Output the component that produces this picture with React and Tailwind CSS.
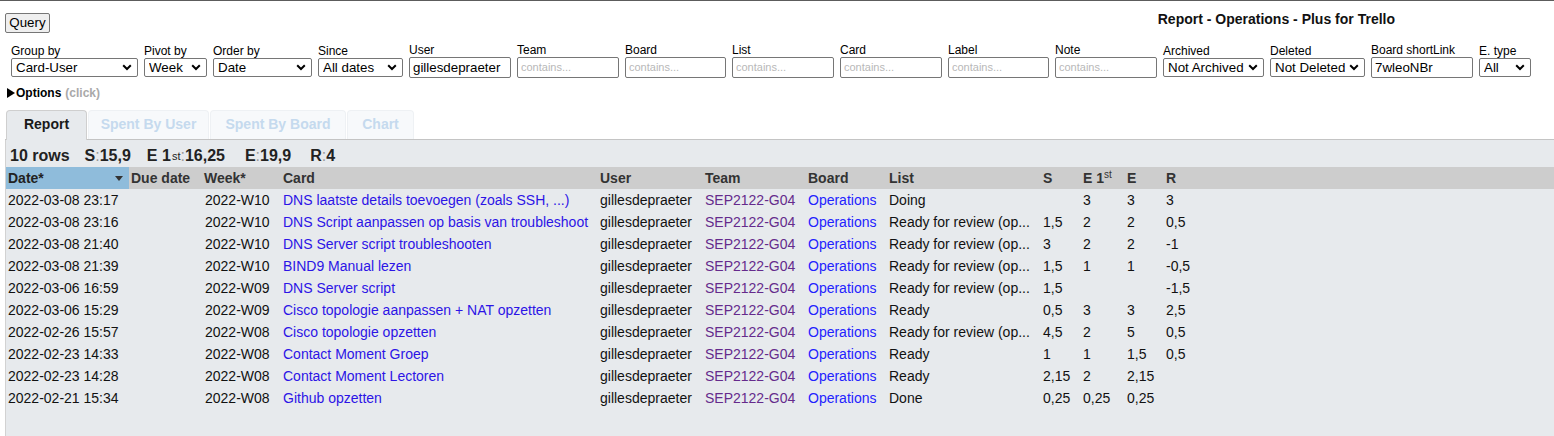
import React from "react";

const font = "font-['Liberation_Sans',Arial,sans-serif]";

function Chevron() {
  return (
    <svg width="10" height="7" viewBox="0 0 10 7" className="shrink-0">
      <path d="M1.2 1.3 L5 5 L8.8 1.3" fill="none" stroke="#000" strokeWidth="2" />
    </svg>
  );
}

function SelectField({ label, value, w }) {
  return (
    <div className="flex flex-col pt-[1px] shrink-0" style={{ width: w }}>
      <div className="text-[12px] leading-[14px] whitespace-nowrap">{label}</div>
      <div className="h-[19px] border border-[#767676] rounded-[2px] bg-white flex items-center pl-[4px] pr-[5px] text-[13.33px] leading-[17px]">
        <span className="flex-1 whitespace-nowrap overflow-hidden">{value}</span>
        <Chevron />
      </div>
    </div>
  );
}

function InputField({ label, value, w }) {
  return (
    <div className="flex flex-col shrink-0" style={{ width: w }}>
      <div className="text-[12px] leading-[14px] whitespace-nowrap">{label}</div>
      <div className="h-[21px] border border-[#767676] rounded-[2px] bg-white flex items-center pl-[3px] whitespace-nowrap overflow-hidden">
        {value ? (
          <span className="text-[13.33px]">{value}</span>
        ) : (
          <span className="text-[11px] text-[#b8b8b8]">contains...</span>
        )}
      </div>
    </div>
  );
}

const rows = [
  ["2022-03-08 23:17", "2022-W10", "DNS laatste details toevoegen (zoals SSH, ...)", "Doing", "", "3", "3", "3"],
  ["2022-03-08 23:16", "2022-W10", "DNS Script aanpassen op basis van troubleshoot", "Ready for review (op...", "1,5", "2", "2", "0,5"],
  ["2022-03-08 21:40", "2022-W10", "DNS Server script troubleshooten", "Ready for review (op...", "3", "2", "2", "-1"],
  ["2022-03-08 21:39", "2022-W10", "BIND9 Manual lezen", "Ready for review (op...", "1,5", "1", "1", "-0,5"],
  ["2022-03-06 16:59", "2022-W09", "DNS Server script", "Ready for review (op...", "1,5", "", "", "-1,5"],
  ["2022-03-06 15:29", "2022-W09", "Cisco topologie aanpassen + NAT opzetten", "Ready", "0,5", "3", "3", "2,5"],
  ["2022-02-26 15:57", "2022-W08", "Cisco topologie opzetten", "Ready for review (op...", "4,5", "2", "5", "0,5"],
  ["2022-02-23 14:33", "2022-W08", "Contact Moment Groep", "Ready", "1", "1", "1,5", "0,5"],
  ["2022-02-23 14:28", "2022-W08", "Contact Moment Lectoren", "Ready", "2,15", "2", "2,15", ""],
  ["2022-02-21 15:34", "2022-W08", "Github opzetten", "Done", "0,25", "0,25", "0,25", ""],
];

const grid =
  "grid grid-cols-[123px_73px_79px_317px_105px_103px_81px_154px_40px_44px_39px_1fr]";

function Cell({ children, className = "" }) {
  return (
    <div className={"pl-[2px] whitespace-nowrap overflow-hidden " + className}>{children}</div>
  );
}

export default function App() {
  return (
    <div className={`w-[1554px] h-[436px] overflow-hidden bg-white text-black border-t border-[#5c5c5c] ${font}`}>
      {/* top row */}
      <div className="flex items-start pt-[12px] pl-[5px]">
        <div className="w-[45px] h-[20px] border border-[#767676] rounded-[2px] bg-[#efefef] flex items-center justify-center text-[13.33px]">
          Query
        </div>
        <div className="ml-auto mr-[159px] -mt-[1px] text-[14px] leading-[15px] font-bold text-[#111]">
          Report - Operations - Plus for Trello
        </div>
      </div>

      {/* filters */}
      <div className="flex items-start gap-[6px] pl-[11px] mt-[10px]">
        <SelectField label="Group by" value="Card-User" w={127} />
        <SelectField label="Pivot by" value="Week" w={63} />
        <SelectField label="Order by" value="Date" w={99} />
        <SelectField label="Since" value="All dates" w={85} />
        <InputField label="User" value="gillesdepraeter" w={102} />
        <InputField label="Team" w={102} />
        <InputField label="Board" w={101} />
        <InputField label="List" w={102} />
        <InputField label="Card" w={102} />
        <InputField label="Label" w={101} />
        <InputField label="Note" w={102} />
        <SelectField label="Archived" value="Not Archived" w={101} />
        <SelectField label="Deleted" value="Not Deleted" w={95} />
        <InputField label="Board shortLink" value="7wleoNBr" w={102} />
        <SelectField label="E. type" value="All" w={52} />
      </div>

      {/* options */}
      <div className="flex items-center mt-[8px] pl-[7px] text-[12px] leading-[14px] font-bold">
        <svg width="8" height="10" viewBox="0 0 8 10" className="mr-[1px]">
          <path d="M0 0 L8 5 L0 10 Z" fill="#000" />
        </svg>
        <span>Options</span>
        <span className="ml-[4px] text-[#a9a9a9]">(click)</span>
      </div>

      {/* tabs */}
      <div className="mt-[10px] ml-[5px] flex gap-[1px] pl-[1px] border-b border-[#c4c4c4] h-[30px]">
        <div className="w-[81px] h-[30px] -mb-px pb-[2px] bg-[#e7eaed] border border-b-0 border-[#cfcfcf] rounded-t-[4px] flex items-center justify-center text-[14px] font-bold text-[#1a1a1a]">
          Report
        </div>
        <div className="w-[121px] h-[29px] pb-[1px] bg-[#f7f9fb] border border-b-0 border-[#eef1f4] rounded-t-[4px] flex items-center justify-center text-[14px] font-bold text-[#c5daee]">
          Spent By User
        </div>
        <div className="w-[136px] h-[29px] pb-[1px] bg-[#f7f9fb] border border-b-0 border-[#eef1f4] rounded-t-[4px] flex items-center justify-center text-[14px] font-bold text-[#c5daee]">
          Spent By Board
        </div>
        <div className="w-[67px] h-[29px] pb-[1px] bg-[#f7f9fb] border border-b-0 border-[#eef1f4] rounded-t-[4px] flex items-center justify-center text-[14px] font-bold text-[#c5daee]">
          Chart
        </div>
      </div>

      {/* panel */}
      <div className="ml-[5px] border-l border-[#d2d2d2] bg-[#e7eaed] h-[300px] pt-[4px]">
        <div className="h-[23px] flex items-center pl-[4px] text-[16px] font-bold text-[#222] whitespace-nowrap">
          <span>10 rows</span>
          <span className="ml-[15px]">S<span className="text-[#9a9a9a] font-normal">:</span>15,9</span>
          <span className="ml-[16px]">
            E 1<sup className="text-[11px] font-normal relative -top-[1px] pl-[1px]">st</sup>
            <span className="text-[#9a9a9a] font-normal">:</span>16,25
          </span>
          <span className="ml-[20px]">E<span className="text-[#9a9a9a] font-normal">:</span>19,9</span>
          <span className="ml-[19px]">R<span className="text-[#9a9a9a] font-normal">:</span>4</span>
        </div>

        {/* header */}
        <div className={`${grid} h-[22px] items-center bg-[#cdcdcd] text-[14px] font-bold text-[#333] leading-[22px]`}>
          <div className="bg-[#8fbcdb] h-[22px] pl-[2px] pr-[6px] flex items-center justify-between text-[#222]">
            <span>Date*</span>
            <svg width="8" height="5" viewBox="0 0 8 5">
              <path d="M0 0 L8 0 L4 5 Z" fill="#333" />
            </svg>
          </div>
          <Cell>Due date</Cell>
          <Cell>Week*</Cell>
          <Cell>Card</Cell>
          <Cell>User</Cell>
          <Cell>Team</Cell>
          <Cell>Board</Cell>
          <Cell>List</Cell>
          <Cell>S</Cell>
          <Cell>
            E 1<sup className="text-[10px] font-normal">st</sup>
          </Cell>
          <Cell>E</Cell>
          <Cell>R</Cell>
        </div>

        {rows.map((r, i) => (
          <div key={i} className={`${grid} h-[22px] items-center text-[14px] leading-[22px] text-[#111]`}>
            <Cell>{r[0]}</Cell>
            <Cell></Cell>
            <Cell className="pl-[3px]">{r[1]}</Cell>
            <Cell className="text-[#2c14e6]">{r[2]}</Cell>
            <Cell>gillesdepraeter</Cell>
            <Cell className="text-[#652a8c]">SEP2122-G04</Cell>
            <Cell className="text-[#2222ff]">Operations</Cell>
            <Cell>{r[3]}</Cell>
            <Cell>{r[4]}</Cell>
            <Cell>{r[5]}</Cell>
            <Cell>{r[6]}</Cell>
            <Cell>{r[7]}</Cell>
          </div>
        ))}
      </div>
    </div>
  );
}
